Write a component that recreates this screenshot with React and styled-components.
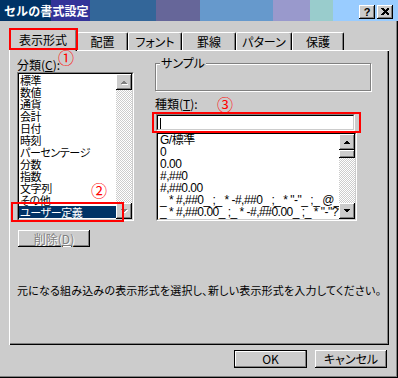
import React from 'react';
import styled, { createGlobalStyle } from 'styled-components';

const UI = `"Noto Sans CJK JP", "Liberation Sans", sans-serif`;
const LATIN = `"Liberation Sans", "Noto Sans CJK JP", sans-serif`;

const GlobalStyle = createGlobalStyle`
  html, body { margin: 0; padding: 0; background: #cccccc; }
  body { font-family: ${UI}; }
`;

const Window = styled.div`
  position: relative;
  width: 398px;
  height: 378px;
  background: #cccccc;
  box-shadow: inset -1px -1px 0 #000, inset -2px -2px 0 #808080;
  font-family: ${UI};
  font-size: 12px;
  color: #000;
  overflow: hidden;
  display: flex;
  flex-direction: column;
  font-feature-settings: "palt";
`;

const TitleBar = styled.div`
  height: 21px;
  flex: none;
  display: flex;
  align-items: flex-start;
  padding: 0 5px 0 4px;
  background: linear-gradient(
    to right,
    #003366 0 51px,
    #333399 51px 90px,
    #336699 90px 156px,
    #666699 156px 200px,
    #6699cc 200px 273px,
    #9999cc 273px 310px,
    #99cccc 310px 333px,
    #99ccff 333px
  );
`;

const TitleText = styled.div`
  color: #fff;
  font-weight: bold;
  font-size: 12px;
  line-height: 21px;
  font-feature-settings: normal;
  letter-spacing: 0.1px;
`;

const TitleControls = styled.div`
  margin-left: auto;
  margin-top: 5px;
  display: flex;
  gap: 2px;
`;

const CaptionButton = styled.div`
  width: 16px;
  height: 14px;
  box-sizing: border-box;
  background: #cccccc;
  box-shadow: inset -1px -1px 0 #000, inset 1px 1px 0 #fff, inset -2px -2px 0 #808080;
  display: flex;
  align-items: center;
  justify-content: center;
  font: bold 11px ${LATIN};
  line-height: 14px;
  color: #000;
  padding-bottom: 1px;
`;

const Body = styled.div`
  flex: 1;
  display: flex;
  flex-direction: column;
  padding: 8px 0 0 9px;
`;

const TabStrip = styled.div`
  position: relative;
  z-index: 1;
  display: flex;
  align-items: flex-end;
  height: 21px;
`;

const Tab = styled.div`
  box-sizing: border-box;
  width: ${(p) => p.$w}px;
  height: ${(p) => (p.$active ? 22 : 18)}px;
  margin-bottom: ${(p) => (p.$active ? -1 : 0)}px;
  background: #cccccc;
  border-top: 1px solid #fff;
  border-left: 1px solid #fff;
  border-right: 1px solid #000;
  border-radius: 2px 2px 0 0;
  box-shadow: inset -1px 0 0 #808080;
  display: flex;
  align-items: center;
  justify-content: center;
  font-size: 12px;
  line-height: 14px;
  padding-bottom: ${(p) => (p.$active ? 1 : 0)}px;
`;

const Panel = styled.div`
  box-sizing: border-box;
  width: 380px;
  height: 295px;
  border-top: 1px solid #fff;
  border-left: 1px solid #fff;
  box-shadow: inset -1px -1px 0 #000, inset -2px -2px 0 #808080;
  padding: 6px 0 0 7px;
  display: flex;
  flex-direction: column;
`;

const Upper = styled.div`
  display: flex;
  gap: 21px;
`;

const Column = styled.div`
  width: ${(p) => p.$w}px;
  display: flex;
  flex-direction: column;
`;

const FieldLabel = styled.div`
  height: ${(p) => p.$h}px;
  line-height: ${(p) => p.$h}px;
  margin-top: ${(p) => p.$mt || 0}px;
  font-size: 12px;
`;

const Mnemonic = styled.span`
  text-decoration: underline;
  text-underline-offset: 1px;
`;

const Sunken = styled.div`
  box-sizing: border-box;
  width: ${(p) => p.$w}px;
  height: ${(p) => p.$h}px;
  margin-top: ${(p) => p.$mt || 0}px;
  margin-left: ${(p) => p.$ml || 0}px;
  border: 1px solid;
  border-color: #808080 #fff #fff #808080;
  flex: none;
`;

const SunkenInner = styled.div`
  box-sizing: border-box;
  height: 100%;
  border: 1px solid;
  border-color: #000 #cccccc #cccccc #000;
  background: #fff;
  display: flex;
  overflow: hidden;
`;

const Rows = styled.div`
  flex: 1;
  min-width: 0;
  overflow: hidden;
`;

const Row = styled.div`
  height: 12px;
  line-height: 12px;
  padding-left: ${(p) => p.$pl || 1}px;
  white-space: nowrap;
  font-size: 11px;
  letter-spacing: -0.4px;
  background: ${(p) => (p.$selected ? '#003366' : 'transparent')};
  color: ${(p) => (p.$selected ? '#fff' : '#000')};
`;

const FormatRow = styled(Row)`
  font-family: ${LATIN};
  font-size: 12px;
  letter-spacing: -0.5px;
`;

const Scrollbar = styled.div`
  width: 16px;
  flex: none;
  display: flex;
  flex-direction: column;
`;

const ScrollButton = styled.div`
  box-sizing: border-box;
  height: ${(p) => p.$h || 16}px;
  flex: none;
  background: #cccccc;
  box-shadow: inset -1px -1px 0 #000, inset 1px 1px 0 #fff, inset -2px -2px 0 #808080;
  display: flex;
  align-items: center;
  justify-content: center;
`;

const Track = styled.div`
  flex: 1;
  background: repeating-conic-gradient(#fff 0% 25%, #cccccc 0% 50%) 0 0 / 2px 2px;
`;

const Caret = styled.div`
  width: 1px;
  height: 11px;
  background: #000;
  margin: 2px 0 0 2px;
`;

const GroupBox = styled.div`
  position: relative;
  box-sizing: border-box;
  width: 216px;
  height: 28px;
  margin-top: 6px;
  border: 1px solid #808080;
  box-shadow: inset 1px 1px 0 #fff, 1px 1px 0 #fff;
`;

const Legend = styled.span`
  position: absolute;
  top: -8px;
  left: 4px;
  padding: 0 1px;
  background: #cccccc;
  line-height: 14px;
  font-size: 12px;
`;

const PushButton = styled.button`
  box-sizing: border-box;
  width: ${(p) => p.$w}px;
  height: ${(p) => p.$h || 18}px;
  margin: ${(p) => p.$m || 0};
  padding: 0;
  background: #cccccc;
  font-family: ${UI};
  font-size: 12px;
  font-feature-settings: "palt";
  line-height: 14px;
  color: ${(p) => (p.disabled ? '#808080' : '#000')};
  text-shadow: ${(p) => (p.disabled ? '1px 1px 0 #fff' : 'none')};
  border: ${(p) => (p.$default ? '1px solid #000' : 'none')};
  box-shadow: ${(p) =>
    p.$default
      ? 'inset -1px -1px 0 #808080, inset 1px 1px 0 #fff'
      : 'inset -1px -1px 0 #000, inset 1px 1px 0 #fff, inset -2px -2px 0 #808080'};
  align-self: flex-start;
  cursor: default;
`;

const Description = styled.div`
  margin-top: 36px;
  line-height: 14px;
  font-size: 11px;
  letter-spacing: 0.2px;
  white-space: nowrap;
`;

const ButtonRow = styled.div`
  display: flex;
  justify-content: flex-end;
  gap: 8px;
  margin-top: 5px;
  padding-right: 11px;
`;

const RedBox = styled.div`
  position: absolute;
  box-sizing: border-box;
  border: 2px solid #ff0000;
  pointer-events: none;
  z-index: 5;
`;

const Marker = styled.div`
  position: absolute;
  width: 16px;
  height: 16px;
  display: flex;
  align-items: center;
  justify-content: center;
  color: #ff0000;
  font-family: "Noto Sans CJK JP", sans-serif;
  font-size: 16px;
  line-height: 16px;
  z-index: 5;
`;

function Arrow({ down, disabled }) {
  const pts = down ? '0,0 7,0 3.5,3.5' : '0,4 7,4 3.5,0.5';
  return (
    <svg width="8" height="5" viewBox="0 0 8 5" shapeRendering="crispEdges">
      {disabled && (
        <polygon points={pts} fill="#fff" transform="translate(1,1)" />
      )}
      <polygon points={pts} fill={disabled ? '#808080' : '#000'} />
    </svg>
  );
}

function CloseGlyph() {
  return (
    <svg width="8" height="7" viewBox="0 0 8 7" shapeRendering="crispEdges">
      <path d="M0 0h2l2 2 2-2h2v1l-2.5 2.5L8 6v1H6L4 5 2 7H0V6l2.5-2.5L0 1z" fill="#000" />
    </svg>
  );
}

const categories = [
  '標準', '数値', '通貨', '会計', '日付', '時刻', 'パーセンテージ',
  '分数', '指数', '文字列', 'その他', 'ユーザー定義',
];

const formats = [
  'G/標準',
  '0',
  '0.00',
  '#,##0',
  '#,##0.00',
  '_ * #,##0_ ;_ * -#,##0_ ;_ * "-"_ ;_ @_',
  '_ * #,##0.00_ ;_ * -#,##0.00_ ;_ * "-"??_ ;_ @_',
];

const tabs = [
  { label: '表示形式', w: 68, active: true },
  { label: '配置', w: 51 },
  { label: 'フォント', w: 54 },
  { label: '罫線', w: 54 },
  { label: 'パターン', w: 56 },
  { label: '保護', w: 52 },
];

export default function App() {
  return (
    <>
      <GlobalStyle />
      <Window>
        <TitleBar>
          <TitleText>セルの書式設定</TitleText>
          <TitleControls>
            <CaptionButton>?</CaptionButton>
            <CaptionButton>
              <CloseGlyph />
            </CaptionButton>
          </TitleControls>
        </TitleBar>
        <Body>
          <TabStrip>
            {tabs.map((t) => (
              <Tab key={t.label} $w={t.w} $active={t.active}>
                {t.label}
              </Tab>
            ))}
          </TabStrip>
          <Panel>
            <Upper>
              <Column $w={117}>
                <FieldLabel $h={15}>
                  分類(<Mnemonic>C</Mnemonic>):
                </FieldLabel>
                <Sunken $w={117} $h={149}>
                  <SunkenInner>
                    <Rows>
                      {categories.map((c, i) => (
                        <Row key={c} $selected={i === categories.length - 1}>
                          {c}
                        </Row>
                      ))}
                    </Rows>
                    <Scrollbar>
                      <ScrollButton>
                        <Arrow disabled />
                      </ScrollButton>
                      <Track />
                      <ScrollButton>
                        <Arrow down disabled />
                      </ScrollButton>
                    </Scrollbar>
                  </SunkenInner>
                </Sunken>
                <PushButton $w={72} $h={17} $m="9px 0 0 1px" disabled>
                  削除(<Mnemonic>D</Mnemonic>)
                </PushButton>
              </Column>
              <Column $w={217}>
                <GroupBox>
                  <Legend>サンプル</Legend>
                </GroupBox>
                <FieldLabel $h={16} $mt={5}>
                  種類(<Mnemonic>T</Mnemonic>):
                </FieldLabel>
                <Sunken $w={199} $h={17} $mt={2} $ml={1}>
                  <SunkenInner>
                    <Caret />
                  </SunkenInner>
                </Sunken>
                <Sunken $w={201} $h={89} $mt={1} $ml={1}>
                  <SunkenInner>
                    <Rows>
                      {formats.map((f) => (
                        <FormatRow key={f} $pl={2}>
                          {f}
                        </FormatRow>
                      ))}
                    </Rows>
                    <Scrollbar>
                      <ScrollButton>
                        <Arrow />
                      </ScrollButton>
                      <ScrollButton $h={8} />
                      <Track />
                      <ScrollButton>
                        <Arrow down />
                      </ScrollButton>
                    </Scrollbar>
                  </SunkenInner>
                </Sunken>
              </Column>
            </Upper>
            <Description>
              元になる組み込みの表示形式を選択し、新しい表示形式を入力してください。
            </Description>
          </Panel>
          <ButtonRow>
            <PushButton $w={73} $default>OK</PushButton>
            <PushButton $w={72}>キャンセル</PushButton>
          </ButtonRow>
        </Body>

        <RedBox style={{ left: 9, top: 28, width: 69, height: 22 }} />
        <RedBox style={{ left: 11, top: 202, width: 113, height: 20 }} />
        <RedBox style={{ left: 152, top: 112, width: 209, height: 21 }} />
        <Marker style={{ left: 58, top: 49 }}>①</Marker>
        <Marker style={{ left: 91, top: 182 }}>②</Marker>
        <Marker style={{ left: 217, top: 96 }}>③</Marker>
      </Window>
    </>
  );
}
